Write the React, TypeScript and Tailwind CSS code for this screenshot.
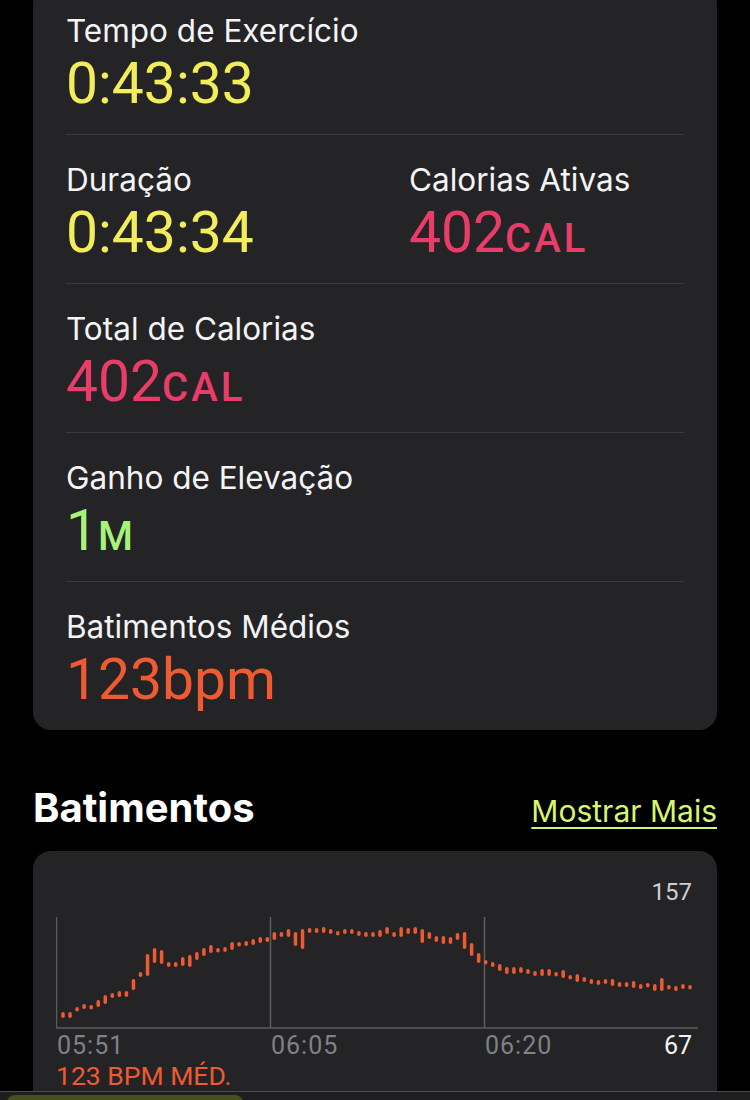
import React from 'react';

// heart rate samples: [top, bottom] in page pixels, one per bar
const beats: [number, number][] = [
  [1012, 1018], [1012, 1018], [1007, 1011], [1004, 1009], [1005, 1009], [1000, 1007], [995, 1004], [993, 998],
  [991, 997], [991, 997], [979, 990], [972, 977], [954, 976], [948, 963], [950, 964], [962, 967],
  [962, 967], [957, 966], [955, 967], [952, 960], [948, 956], [945, 953], [948, 952], [947, 952],
  [942, 950], [942, 946], [941, 946], [939, 945], [937, 943], [937, 942], [932, 940], [932, 937],
  [929, 937], [932, 946], [929, 949], [928, 933], [928, 933], [927, 933], [929, 934], [931, 934],
  [929, 934], [929, 934], [931, 936], [932, 937], [932, 937], [930, 937], [927, 934], [932, 937],
  [927, 937], [928, 934], [927, 934], [929, 943], [932, 939], [936, 942], [936, 944], [937, 944],
  [933, 940], [932, 949], [943, 956], [953, 963], [960, 964], [962, 967], [964, 971], [967, 974],
  [967, 974], [967, 973], [969, 974], [971, 976], [969, 976], [969, 976], [972, 976], [970, 978],
  [975, 979], [974, 982], [977, 982], [979, 984], [980, 985], [979, 984], [979, 986], [982, 987],
  [982, 987], [981, 988], [984, 989], [983, 987], [984, 991], [978, 991], [985, 989], [986, 991],
  [984, 989], [985, 989],
];

type Metric = { label: string; value: string; unit?: string; color: string };

const MetricBlock: React.FC<{ m: Metric }> = ({ m }) => (
  <div>
    <div className="font-['Inter',sans-serif] text-[31.5px] leading-[36px] text-[#f4f4f5]">{m.label}</div>
    <div className={`mt-[6px] flex h-[57px] items-baseline font-[Roboto,sans-serif] leading-none ${m.color}`}>
      <span className="text-[57px] leading-[57px]">{m.value}</span>
      {m.unit && <span className="text-[40px] font-medium tracking-[3px]">{m.unit}</span>}
    </div>
  </div>
);

const HeartChart: React.FC = () => (
  <svg width="642" height="112" viewBox="56 917 642 112" className="block">
    <line x1="56.5" y1="917" x2="56.5" y2="1028" stroke="#5c5c60" strokeWidth="1.5" />
    <line x1="270.5" y1="917" x2="270.5" y2="1028" stroke="#5c5c60" strokeWidth="1.5" />
    <line x1="484.5" y1="917" x2="484.5" y2="1028" stroke="#5c5c60" strokeWidth="1.5" />
    <line x1="56" y1="1028" x2="698" y2="1028" stroke="#5c5c60" strokeWidth="1.5" />
    {beats.map(([top, bottom], i) => {
      const x = 63 + i * 7.045;
      const h = Math.max(bottom - top, 4.5);
      return <rect key={i} x={x - 1.75} y={top} width="3.5" height={h} rx="1.75" fill="#ee5a32" />;
    })}
  </svg>
);

const App: React.FC = () => {
  return (
    <div className="relative h-[1100px] w-[750px] overflow-hidden bg-black">
      <div className="mx-[33px] -mt-[14px] rounded-[18px] bg-[#242426] px-[33px] pb-[22px]">
        <div className="border-b border-[#3a3a3c] pt-[27px] pb-[22px]">
          <MetricBlock m={{ label: 'Tempo de Exercício', value: '0:43:33', color: 'text-[#f3ed5a]' }} />
        </div>
        <div className="grid grid-cols-[343px_1fr] border-b border-[#3a3a3c] pt-[27px] pb-[22px]">
          <MetricBlock m={{ label: 'Duração', value: '0:43:34', color: 'text-[#f3ed5a]' }} />
          <MetricBlock m={{ label: 'Calorias Ativas', value: '402', unit: 'CAL', color: 'text-[#e93c69]' }} />
        </div>
        <div className="border-b border-[#3a3a3c] pt-[27px] pb-[22px]">
          <MetricBlock m={{ label: 'Total de Calorias', value: '402', unit: 'CAL', color: 'text-[#e93c69]' }} />
        </div>
        <div className="border-b border-[#3a3a3c] pt-[27px] pb-[22px]">
          <MetricBlock m={{ label: 'Ganho de Elevação', value: '1', unit: 'M', color: 'text-[#a8f27a]' }} />
        </div>
        <div className="pt-[27px]">
          <MetricBlock m={{ label: 'Batimentos Médios', value: '123bpm', color: 'text-[#ee5a32]' }} />
        </div>
      </div>

      <div className="mt-[55px] flex h-[46px] items-baseline justify-between px-[33px]">
        <h2 className="font-['Inter',sans-serif] text-[40px] font-bold leading-[46px] text-white">Batimentos</h2>
        <a className="font-['Inter',sans-serif] text-[30px] leading-[36px] text-[#d6f66f] underline decoration-2 underline-offset-[5px]">
          Mostrar Mais
        </a>
      </div>

      <div className="mx-[33px] mt-[20px] h-[300px] rounded-[18px] bg-[#242426] pt-[27px] pl-[23px] pr-[19px]">
        <div className="flex justify-end pr-[6px] font-[Roboto,sans-serif] text-[24px] leading-[28px] text-[#cfcfd2]">157</div>
        <div className="mt-[11px]">
          <HeartChart />
        </div>
        <div className="mt-[3px] flex font-[Roboto,sans-serif] text-[25px] leading-[28px] text-[#808085]">
          <span className="w-[214px] shrink-0 pl-px tracking-[1px]">05:51</span>
          <span className="w-[214px] shrink-0 pl-px tracking-[1px]">06:05</span>
          <span className="flex-1 pl-px tracking-[1px]">06:20</span>
          <span className="pr-[6px] text-[#f4f4f5]">67</span>
        </div>
        <div className="mt-px font-[Roboto,sans-serif] text-[26.5px] leading-[30px] text-[#ee5a32]">123 BPM MÉD.</div>
      </div>

      <div className="absolute bottom-0 left-0 h-[9px] w-full border-t border-[#4a4a4c] bg-[#1e1e20]">
        <div className="mt-[3px] ml-[7px] h-[8px] w-[236px] rounded-t-[12px] bg-[#464f1e]" />
      </div>
    </div>
  );
};

export default App;
